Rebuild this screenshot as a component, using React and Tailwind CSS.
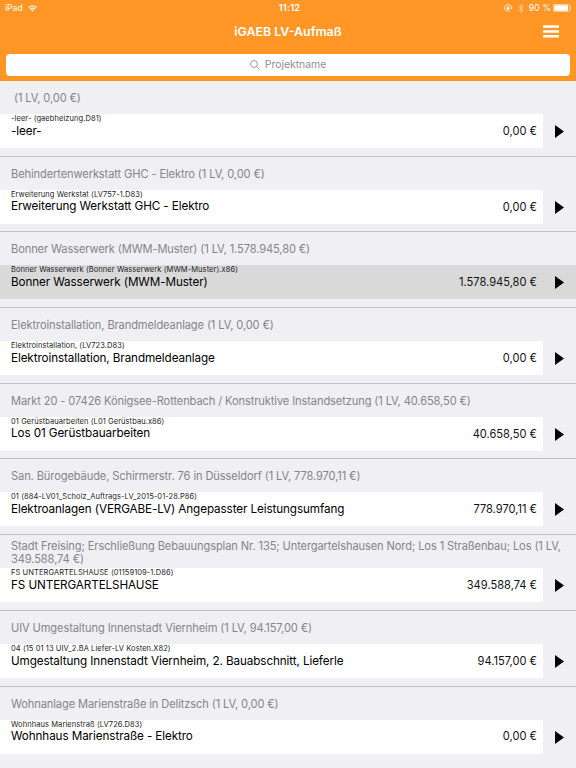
const projects = [
  { header: '(1 LV, 0,00 €)', indent: true, file: '-leer- (gaebheizung.D81)', name: '-leer-', sum: '0,00 €' },
  { header: 'Behindertenwerkstatt GHC - Elektro (1 LV, 0,00 €)', file: 'Erweiterung Werkstat (LV757-1.D83)', name: 'Erweiterung Werkstatt GHC - Elektro', sum: '0,00 €' },
  { header: 'Bonner Wasserwerk (MWM-Muster) (1 LV, 1.578.945,80 €)', file: 'Bonner Wasserwerk (Bonner Wasserwerk (MWM-Muster).x86)', name: 'Bonner Wasserwerk (MWM-Muster)', sum: '1.578.945,80 €', selected: true },
  { header: 'Elektroinstallation, Brandmeldeanlage (1 LV, 0,00 €)', file: 'Elektroinstallation, (LV723.D83)', name: 'Elektroinstallation, Brandmeldeanlage', sum: '0,00 €' },
  { header: 'Markt 20 - 07426 Königsee-Rottenbach / Konstruktive Instandsetzung (1 LV, 40.658,50 €)', file: '01 Gerüstbauarbeiten (L01 Gerüstbau.x86)', name: 'Los 01 Gerüstbauarbeiten', sum: '40.658,50 €' },
  { header: 'San. Bürogebäude, Schirmerstr. 76 in Düsseldorf (1 LV, 778.970,11 €)', file: '01 (884-LV01_Scholz_Auftrags-LV_2015-01-28.P86)', name: 'Elektroanlagen (VERGABE-LV) Angepasster Leistungsumfang', sum: '778.970,11 €' },
  { header: 'Stadt Freising; Erschließung Bebauungsplan Nr. 135; Untergartelshausen Nord; Los 1 Straßenbau; Los (1 LV, 349.588,74 €)', file: 'FS UNTERGARTELSHAUSE (01159109-1.D86)', name: 'FS UNTERGARTELSHAUSE', sum: '349.588,74 €' },
  { header: 'UIV Umgestaltung Innenstadt Viernheim (1 LV, 94.157,00 €)', file: '04 (15 01 13 UIV_2.BA Liefer-LV Kosten.X82)', name: 'Umgestaltung Innenstadt Viernheim, 2. Bauabschnitt, Lieferle', sum: '94.157,00 €' },
  { header: 'Wohnanlage Marienstraße in Delitzsch (1 LV, 0,00 €)', file: 'Wohnhaus Marienstraß (LV726.D83)', name: 'Wohnhaus Marienstraße - Elektro', sum: '0,00 €' },
];

function StatusBar() {
  return (
    <div className="grid h-4 grid-cols-3 items-center pl-[5px] pr-[4px] text-[8.6px] leading-4">
      <div className="flex items-center gap-[5px]">
        <span>iPad</span>
        <svg className="h-[7px] w-[9px]" viewBox="0 0 18 14" fill="none" stroke="currentColor" strokeWidth="2.4">
          <path d="M1 5 Q9 -2 17 5" />
          <path d="M4 8.4 Q9 4 14 8.4" />
          <path d="M6.3 10.5 Q9 8.2 11.7 10.5 L9 13.5 Z" fill="currentColor" stroke="none" />
        </svg>
      </div>
      <div className="pl-[2px] text-center text-[9.3px] font-semibold tracking-[0.02em]">11:12</div>
      <div className="flex items-center justify-end">
        <svg className="mr-[5px] h-2 w-[9px]" viewBox="0 0 18 16" fill="none" stroke="currentColor" strokeWidth="1.5">
          <path d="M15 8 A7 7 0 1 0 12.5 13" />
          <path d="M12.5 7.5 H17.5 L15 10.5 Z" fill="currentColor" stroke="none" />
          <rect x="5.2" y="7.2" width="5.6" height="4" fill="currentColor" stroke="none" />
          <path d="M6.2 7.5 V6 A1.8 1.8 0 0 1 9.8 6 V7.5" />
        </svg>
        <svg className="mr-[5px] h-[9px] w-[6px] opacity-70" viewBox="0 0 12 18" fill="none" stroke="currentColor" strokeWidth="1.7">
          <path d="M1.5 5 L10 13 L6 17 V1 L10 5 L1.5 13" />
        </svg>
        <span className="mr-[2px] tracking-[0.15px]">90 %</span>
        <svg className="h-2 w-[19px]" viewBox="0 0 19 8" fill="currentColor">
          <rect x="0.4" y="0.4" width="16.2" height="7.2" rx="1" fill="none" stroke="currentColor" strokeWidth="0.6" />
          <rect x="1.2" y="1.2" width="13.8" height="5.6" rx="0.4" />
          <path d="M17.4 2.6 Q18.6 4 17.4 5.4 Z" />
        </svg>
      </div>
    </div>
  );
}

function ProjectSection({ project }) {
  return (
    <section className="group flex h-[75.7px] flex-col">
      <div className="flex h-[33px] shrink-0 items-center pl-[11px] pt-[2px]">
        <h2 className={`w-[555px] text-[11.1px] leading-[13px] tracking-[-0.107px] text-[#85858a] ${project.indent ? 'pl-[3px]' : ''}`}>
          {project.header}
        </h2>
      </div>
      <div className={`flex h-[34px] shrink-0 ${project.selected ? 'bg-[#d9d9d9]' : ''}`}>
        <div className={`flex w-[543px] items-center justify-between pl-[11px] pr-[6px] ${project.selected ? '' : 'bg-white'}`}>
          <div className="h-full">
            <p className="h-[9.7px] whitespace-nowrap text-[7.5px] leading-[10.6px] tracking-[0.08px] text-[#222]">{project.file}</p>
            <p className="whitespace-nowrap text-[11.7px] leading-[15px] tracking-[-0.1px] text-black">{project.name}</p>
          </div>
          <span className="whitespace-nowrap pt-[0.5px] text-[11.1px] text-[#111]">{project.sum}</span>
        </div>
        <div className="flex flex-1 items-center pl-[12px] pt-px">
          <svg className="h-[13px] w-[9px]" viewBox="0 0 9 13">
            <path d="M0 0 L9 6.5 L0 13 Z" fill="#000" />
          </svg>
        </div>
      </div>
      <div className="flex-1 border-b border-[#c0c0c5] group-last:border-transparent" />
    </section>
  );
}

export default function App() {
  return (
    <div className="h-[768px] w-[576px] overflow-hidden bg-[#efeff4] font-['Inter','Liberation_Sans',sans-serif]">
      <header className="flex h-[81px] flex-col bg-[#ff9626] text-white">
        <StatusBar />
        <div className="grid h-[38px] grid-cols-[1fr_auto_1fr] items-center pb-[6px]">
          <span />
          <h1 className="text-[12.4px] font-semibold">iGAEB LV-Aufmaß</h1>
          <svg className="mb-px mr-[17px] h-[13px] w-4 justify-self-end" viewBox="0 0 16 13" fill="currentColor">
            <rect y="0.3" width="16" height="2.5" rx="0.4" />
            <rect y="5.2" width="16" height="2.5" rx="0.4" />
            <rect y="10.1" width="16" height="2.5" rx="0.4" />
          </svg>
        </div>
        <div className="mx-[6px] flex h-[21.5px] items-center justify-center gap-[5px] rounded-[4px] bg-white pt-px text-[10.4px] text-[#8e8e93]">
          <svg className="h-[10px] w-[10px]" viewBox="0 0 10 10" fill="none" stroke="currentColor" strokeWidth="0.9">
            <circle cx="4" cy="4" r="3.4" />
            <path d="M6.5 6.5 L9.6 9.6" />
          </svg>
          <span>Projektname</span>
        </div>
      </header>
      <main>
        {projects.map((project) => (
          <ProjectSection key={project.file} project={project} />
        ))}
      </main>
    </div>
  );
}
